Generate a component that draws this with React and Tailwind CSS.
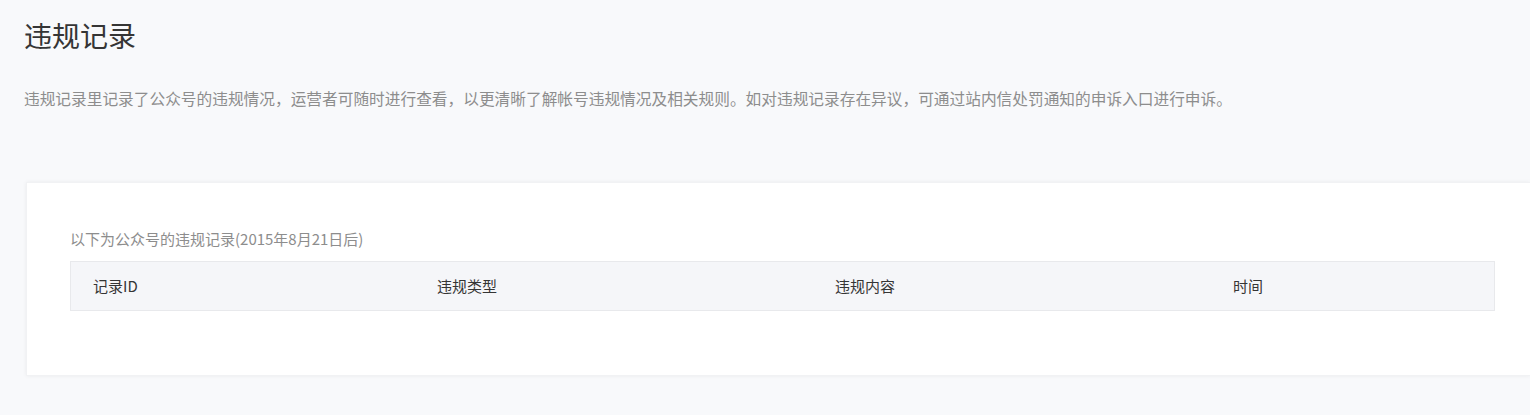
import React from 'react';

const columns = [
  { key: 'id', label: '记录ID', width: 'w-[344px]' },
  { key: 'type', label: '违规类型', width: 'w-[398px]' },
  { key: 'content', label: '违规内容', width: 'w-[398px]' },
  { key: 'time', label: '时间', width: 'flex-1' },
];

function App() {
  return (
    <div
      className="min-h-screen bg-[#f8f9fb] pl-[24px] overflow-hidden"
      style={{ fontFamily: '"Noto Sans CJK SC", "Noto Sans", sans-serif' }}
    >
      {/* Header */}
      <h1 className="pt-[17px] text-[28px] leading-[36px] text-[#353535] font-normal">
        违规记录
      </h1>
      <p className="mt-[34px] text-[15.7px] leading-[24px] text-[#8d8d8d] whitespace-nowrap">
        违规记录里记录了公众号的违规情况，运营者可随时进行查看，以更清晰了解帐号违规情况及相关规则。如对违规记录存在异议，可通过站内信处罚通知的申诉入口进行申诉。
      </p>

      {/* Record card */}
      <div className="mt-[71px] ml-[2px] h-[194px] bg-white shadow-[0_0_4px_rgba(0,0,0,0.06)] border border-[#f1f2f4] border-r-0 pt-[44px] pl-[43px] pr-[35px]">
        <p className="text-[15px] leading-[24px] text-[#8d8d8d] whitespace-nowrap">
          以下为公众号的违规记录(2015年8月21日后)
        </p>
        <div className="mt-[10px] h-[50px] flex items-center bg-[#f5f6f9] border border-[#e8e9ec]">
          {columns.map((col) => (
            <div
              key={col.key}
              className={`${col.width} pl-[22px] text-[15px] text-[#353535] whitespace-nowrap`}
            >
              {col.label}
            </div>
          ))}
        </div>
      </div>
    </div>
  );
}

export default App;
